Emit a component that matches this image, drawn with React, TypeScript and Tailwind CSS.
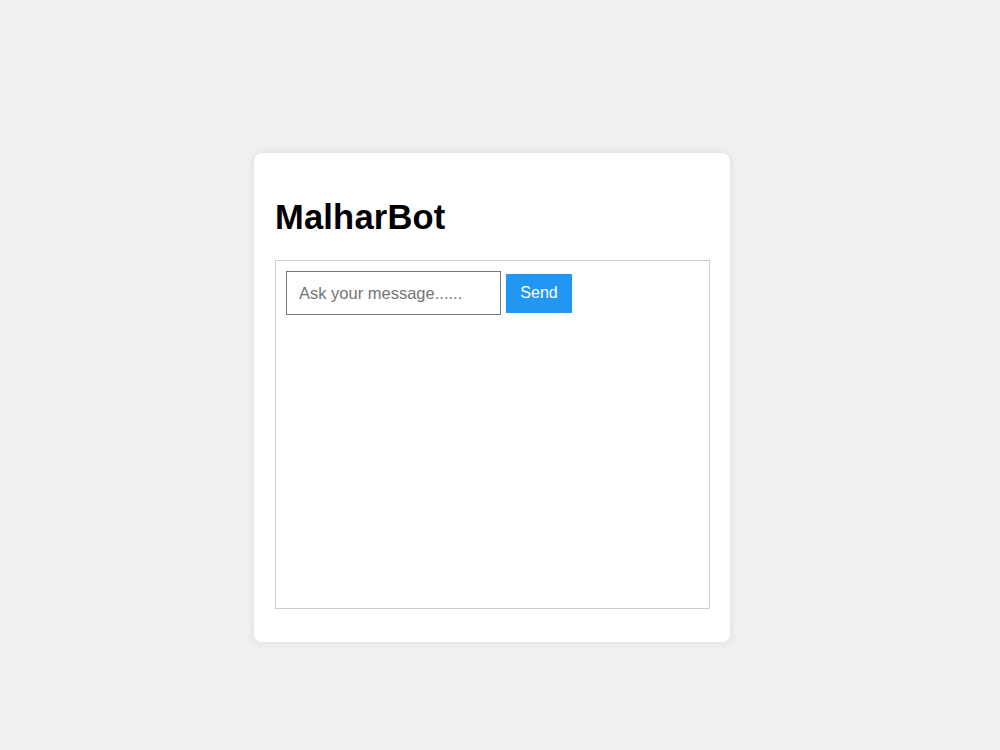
import React from "react";

export default function App() {
  return (
    <div
      className="min-h-[750px] w-full bg-[#f1f1f1] pt-[153px] pl-[254px]"
      style={{ fontFamily: '"Liberation Sans", Arial, sans-serif' }}
    >
      <div className="w-[476px] h-[489px] bg-white rounded-lg shadow-[0_0_10px_rgba(0,0,0,0.1)] px-[21px] pt-[46px]">
        <h1 className="text-[34.5px] leading-[36px] tracking-[0.2px] font-bold text-black m-0">MalharBot</h1>
        <div className="mt-[25px] h-[349px] w-[435px] border border-[#cccccc] p-[10px]">
          <div className="flex items-center gap-[5px]">
            <input
              type="text"
              placeholder="Ask your message......"
              className="w-[215px] h-[44px] border border-[#767676] px-[12px] text-[16.5px] text-black placeholder:text-[#757575] outline-none"
              style={{ fontFamily: '"Liberation Sans", Arial, sans-serif' }}
            />
            <button
              className="w-[66px] h-[39px] bg-[#2196f3] text-white text-[16px]"
              style={{ fontFamily: '"Liberation Sans", Arial, sans-serif' }}
            >
              Send
            </button>
          </div>
        </div>
      </div>
    </div>
  );
}
